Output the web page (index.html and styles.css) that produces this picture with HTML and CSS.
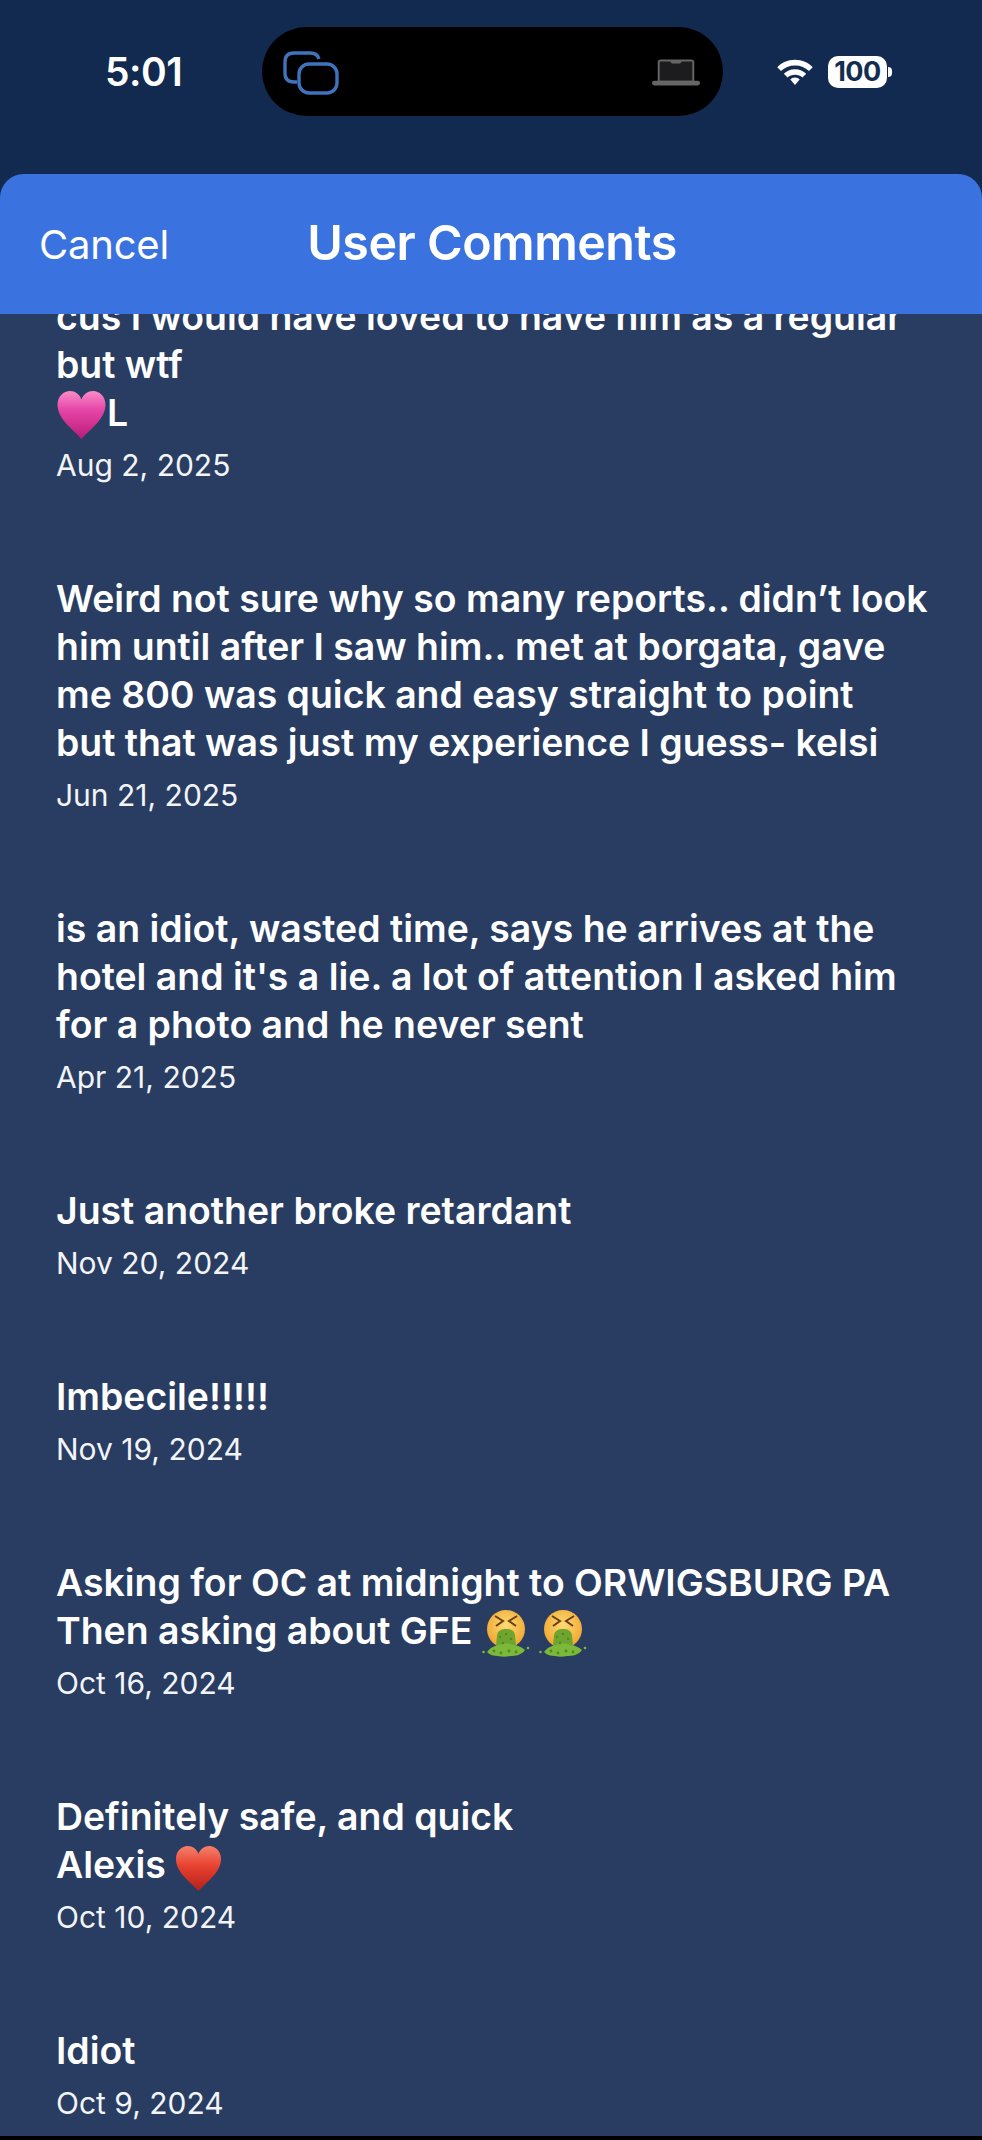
FILE: index.html
```html
<!DOCTYPE html>
<html lang="en">
<head>
    <meta charset="UTF-8">
    <meta name="viewport" content="width=device-width, initial-scale=1.0">
    <title>User Comments</title>
    <link rel="stylesheet" href="styles.css">
</head>
<body>
    <div class="status-bar">
        <span class="clock">5:01</span>
        <div class="island">
            <svg class="island-copy" width="58" height="44" viewBox="0 0 58 44" fill="none" stroke="#3f73bd" stroke-width="3.4">
                <path d="M15 31 H12 C6 31 3 28 3 22 V11 C3 5 6 2 12 2 H28 C33 2 36 4 37 8"/>
                <rect x="17" y="13" width="38" height="29" rx="10"/>
            </svg>
            <svg class="island-laptop" width="48" height="30" viewBox="0 0 50 30">
                <path d="M6 24 V4 C6 2 7 1 9 1 H41 C43 1 44 2 44 4 V24 Z" fill="#666"/>
                <path d="M8 23 V3 H19 C20 5 21 5 22 5 H28 C29 5 30 5 31 3 H42 V23 Z" fill="#1c1c1e"/>
                <rect x="0" y="23" width="50" height="5" rx="2.5" fill="#666"/>
            </svg>
        </div>
        <div class="status-right">
            <svg width="38" height="28" viewBox="0 0 40 30" fill="#fff">
                <path d="M20 2 C28 2 34 5 39 10 L35 14 C31 10 26 8 20 8 C14 8 9 10 5 14 L1 10 C6 5 12 2 20 2 Z"/>
                <path d="M20 12 C25 12 29 14 32 17 L28 21 C26 19 23 18 20 18 C17 18 14 19 12 21 L8 17 C11 14 15 12 20 12 Z"/>
                <path d="M20 21 C22 21 24 22 25 23 L20 29 L15 23 C16 22 18 21 20 21 Z"/>
            </svg>
            <span class="battery">100</span>
            <span class="battery-tip"></span>
        </div>
    </div>

    <div class="sheet">
        <header class="sheet-head">
            <span class="cancel">Cancel</span>
            <h1>User Comments</h1>
        </header>

        <div class="comments">
            <div class="comment first">
                <p>cus I would have loved to have him as a regular<br>but wtf<br><svg class="emoji heart-pink" viewBox="0 0 48 48"><use href="#heart-pink"/></svg>L</p>
                <time>Aug 2, 2025</time>
            </div>
            <div class="comment">
                <p>Weird not sure why so many reports.. didn’t look<br>him until after I saw him.. met at borgata, gave<br>me 800 was quick and easy straight to point<br>but that was just my experience I guess- kelsi</p>
                <time>Jun 21, 2025</time>
            </div>
            <div class="comment">
                <p>is an idiot, wasted time, says he arrives at the<br>hotel and it's a lie. a lot of attention I asked him<br>for a photo and he never sent</p>
                <time>Apr 21, 2025</time>
            </div>
            <div class="comment">
                <p>Just another broke retardant</p>
                <time>Nov 20, 2024</time>
            </div>
            <div class="comment">
                <p>Imbecile!!!!!</p>
                <time>Nov 19, 2024</time>
            </div>
            <div class="comment">
                <p>Asking for OC at midnight to ORWIGSBURG PA<br>Then asking about GFE <svg class="emoji sick" viewBox="0 0 48 48"><use href="#sick-face"/></svg> <svg class="emoji sick" viewBox="0 0 48 48"><use href="#sick-face"/></svg></p>
                <time>Oct 16, 2024</time>
            </div>
            <div class="comment">
                <p>Definitely safe, and quick<br>Alexis <svg class="emoji heart-red" viewBox="0 0 48 48"><use href="#heart-red"/></svg></p>
                <time>Oct 10, 2024</time>
            </div>
            <div class="comment">
                <p>Idiot</p>
                <time>Oct 9, 2024</time>
            </div>
        </div>
    </div>

    <svg class="emoji-defs" width="0" height="0">
        <defs>
            <linearGradient id="pink-fill" x1="0" y1="0" x2="0" y2="1">
                <stop offset="0" stop-color="#f98cc8"/>
                <stop offset="0.4" stop-color="#e645a8"/>
                <stop offset="1" stop-color="#b81c78"/>
            </linearGradient>
            <linearGradient id="red-fill" x1="0" y1="0" x2="0" y2="1">
                <stop offset="0" stop-color="#f4806c"/>
                <stop offset="0.45" stop-color="#e8412f"/>
                <stop offset="1" stop-color="#b3211a"/>
            </linearGradient>
            <radialGradient id="face-fill" cx="0.5" cy="0.4" r="0.6">
                <stop offset="0" stop-color="#fbdc74"/>
                <stop offset="1" stop-color="#f0a52f"/>
            </radialGradient>
            <symbol id="heart-pink" viewBox="0 0 48 48">
                <path d="M24 47 C15 37 1 28 1 14 C1 6 7 1 13 1 C18 1 22 4 24 9 C26 4 30 1 35 1 C41 1 47 6 47 14 C47 28 33 37 24 47 Z" fill="url(#pink-fill)"/>
            </symbol>
            <symbol id="heart-red" viewBox="0 0 48 48">
                <path d="M24 47 C15 37 1 28 1 14 C1 6 7 1 13 1 C18 1 22 4 24 9 C26 4 30 1 35 1 C41 1 47 6 47 14 C47 28 33 37 24 47 Z" fill="url(#red-fill)"/>
            </symbol>
            <symbol id="sick-face" viewBox="0 0 48 48">
                <circle cx="24" cy="19" r="19" fill="url(#face-fill)"/>
                <path d="M13 6 L21 11 L14 16 M35 6 L27 11 L34 16" fill="none" stroke="#6b3d12" stroke-width="2"/>
                <path d="M14 36 L15 25 C16 20 20 19 24 19 C28 19 32 20 33 25 L34 36 Z" fill="#6fa52e"/>
                <path d="M5 42 C9 37 14 35 18 35 C22 33 27 33 31 35 C35 35 40 37 43 40 C40 45 33 46 28 46 C24 47 20 47 16 46 C12 46 8 45 5 42 Z" fill="#7cb83a"/>
                <g fill="#4f8a22">
                    <circle cx="18" cy="27" r="1.2"/>
                    <circle cx="24" cy="24" r="1.2"/>
                    <circle cx="29" cy="29" r="1.2"/>
                    <circle cx="21" cy="33" r="1.2"/>
                    <circle cx="12" cy="41" r="1.4"/>
                    <circle cx="19" cy="43" r="1.4"/>
                    <circle cx="27" cy="41" r="1.4"/>
                    <circle cx="34" cy="42" r="1.4"/>
                </g>
                <circle cx="1.5" cy="42" r="1.3" fill="#7cb83a"/>
                <circle cx="46" cy="38" r="1.3" fill="#7cb83a"/>
            </symbol>
        </defs>
    </svg>
</body>
</html>
```

FILE: styles.css
```css
:root {
    --list-bg: #283d61;
    --head-bg: #3a73e0;
}

html {
    height: 100%;
}

body {
    margin: 0;
    height: 2136px;
    overflow: hidden;
    background: linear-gradient(#122a50, #152c4e);
    color: #fff;
    font-family: Inter, "Noto Sans", sans-serif;
    display: flex;
    flex-direction: column;
    border-bottom: 4px solid #000;
}

/* status bar */
.status-bar {
    height: 174px;
    flex-shrink: 0;
    box-sizing: border-box;
    padding-top: 27px;
    display: flex;
    align-items: flex-start;
}

.clock {
    width: 262px;
    padding-left: 105px;
    box-sizing: border-box;
    font-size: 39px;
    font-weight: 600;
    line-height: 90px;
    height: 90px;
    letter-spacing: -0.5px;
}

.island {
    width: 461px;
    height: 89px;
    background: #000;
    border-radius: 45px;
    display: flex;
    justify-content: space-between;
    align-items: center;
    box-sizing: border-box;
    padding: 3px 23px 0 20px;
}

.status-right {
    display: flex;
    align-items: center;
    height: 90px;
    margin-left: 53px;
}

.battery {
    width: 59px;
    height: 32px;
    margin-left: 14px;
    border-radius: 10px;
    background: #fff;
    color: #132c52;
    font-size: 27px;
    font-weight: 700;
    line-height: 32px;
    text-align: center;
    letter-spacing: -0.5px;
}

.battery-tip {
    width: 4px;
    height: 10px;
    margin-left: 1px;
    background: #fff;
    border-radius: 0 5px 5px 0;
}

/* sheet */
.sheet {
    flex: 1;
    min-height: 0;
    display: flex;
    flex-direction: column;
    background: var(--list-bg);
    border-radius: 24px 24px 0 0;
}

.sheet-head {
    height: 140px;
    flex-shrink: 0;
    background: var(--head-bg);
    border-radius: 24px 24px 0 0;
    display: grid;
    grid-template-columns: 1fr auto 1fr;
    align-items: center;
    padding: 0 40px 0 39px;
}

.sheet-head h1 {
    margin: 0 0 0 3px;
    font-size: 48.4px;
    font-weight: 600;
    letter-spacing: -0.5px;
    padding-bottom: 4px;
}

.cancel {
    font-size: 40px;
    font-weight: 400;
    letter-spacing: -0.2px;
}

.comments {
    flex: 1;
    min-height: 0;
    overflow: hidden;
    padding: 0 40px 0 56px;
}

.comment {
    margin-bottom: 90px;
}

.comment.first {
    margin-top: -21px;
}

.comment p {
    margin: 0;
    font-size: 37.4px;
    font-weight: 600;
    line-height: 48px;
    white-space: nowrap;
}

.comment time {
    display: block;
    margin-top: 8px;
    font-size: 30px;
    line-height: 40px;
    color: #f2f4f8;
}

/* negative margins so the emoji don't stretch the line */
.emoji {
    display: inline-block;
    vertical-align: -6px;
    margin: -8px 0;
}

.emoji.heart-pink {
    width: 51px;
    height: 50px;
}

.emoji.heart-red {
    width: 47px;
    height: 47px;
}

.emoji.sick {
    width: 48px;
    height: 48px;
}

.emoji-defs {
    position: absolute;
}
```
